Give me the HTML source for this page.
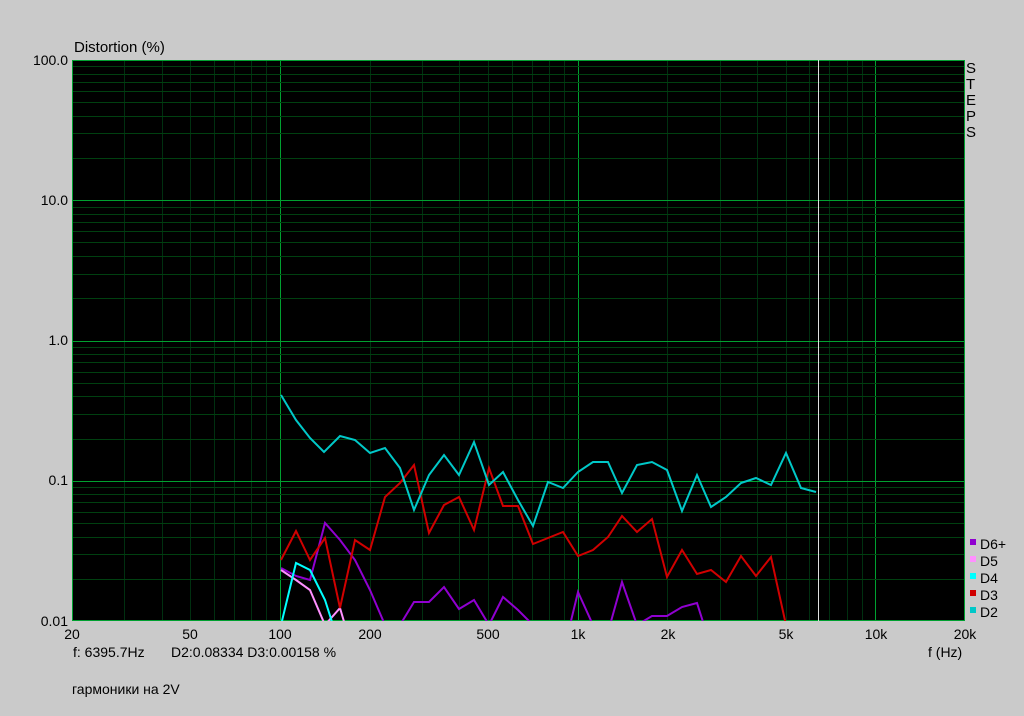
<!DOCTYPE html><html><head><style>
body{margin:0;background:#cacaca;width:1024px;height:711px;overflow:hidden;font-family:"Liberation Sans",sans-serif;}
svg text{font-family:"Liberation Sans",sans-serif;font-size:14px;fill:#000}
</style></head><body>
<svg width="1024" height="711" xmlns="http://www.w3.org/2000/svg" id="s">
<rect x="72" y="60" width="893" height="561" fill="#000"/>
<g id="g"></g>
<rect x="72.5" y="60.5" width="892" height="560" fill="none" stroke="#00a030"/>
<text x="74" y="52" style="font-size:15px">Distortion (%)</text>
<g text-anchor="end">
<text x="68" y="65">100.0</text><text x="68" y="205">10.0</text><text x="68" y="345">1.0</text><text x="68" y="485">0.1</text><text x="68" y="626">0.01</text></g>
<g text-anchor="middle">
<text x="72" y="639">20</text><text x="190" y="639">50</text><text x="280" y="639">100</text><text x="370" y="639">200</text><text x="488" y="639">500</text><text x="578" y="639">1k</text><text x="668" y="639">2k</text><text x="786" y="639">5k</text><text x="876" y="639">10k</text><text x="965" y="639">20k</text></g>
<text x="928" y="657">f (Hz)</text>
<text x="73" y="657">f: 6395.7Hz</text><text x="171" y="657">D2:0.08334  D3:0.00158 %</text>
<text x="72" y="694">гармоники на 2V</text>
<g><text x="966" y="73" style="font-size:15px">S</text><text x="966" y="89" style="font-size:15px">T</text><text x="966" y="105" style="font-size:15px">E</text><text x="966" y="121" style="font-size:15px">P</text><text x="966" y="137" style="font-size:15px">S</text></g>
<rect x="970" y="539" width="6" height="6" fill="#9000d0"/><text x="980" y="549">D6+</text>
<rect x="970" y="556" width="6" height="6" fill="#ff90ff"/><text x="980" y="566">D5</text>
<rect x="970" y="573" width="6" height="6" fill="#00ffff"/><text x="980" y="583">D4</text>
<rect x="970" y="590" width="6" height="6" fill="#d00000"/><text x="980" y="600">D3</text>
<rect x="970" y="607" width="6" height="6" fill="#00c8c8"/><text x="980" y="617">D2</text>
<line x1="818.5" y1="60" x2="818.5" y2="621" stroke="#e0e0e0"/>
<svg x="72" y="60" width="893" height="561" viewBox="72 60 893 561">
<g fill="none" stroke-width="2">
<polyline stroke="#9000d0" points="281,568 296,576 310,580 325,523 340,540 355,560 370,590 385,625 400,625 414,602 429,602 444,587 459,609 474,600 489,625 503,597 518,610 533,625 570,625 578,592 593,625 610,625 622,582 637,625 652,616 667,616 682,607 697,603 704,625"/>
<polyline stroke="#ff90ff" points="281,570 296,580 310,590 325,625 340,608 345,625"/>
<polyline stroke="#00ffff" points="281,625 296,563 310,570 325,600 333,625"/>
<polyline stroke="#d00000" points="281,560 296,531 310,560 325,538 340,608 355,540 370,550 385,497 400,483 414,465 429,533 444,505 459,497 474,530 489,468 503,506 518,506 533,544 548,538 563,532 578,556 593,550 608,537 622,516 637,532 652,519 667,577 682,550 697,574 711,570 726,582 741,556 756,576 771,557 786,625"/>
<polyline stroke="#00c8c8" points="281,395 296,420 310,438 324,452 340,436 355,440 370,453 385,448 400,468 414,510 429,475 444,455 459,475 474,442 489,485 503,472 518,500 533,526 548,482 563,488 578,472 593,462 608,462 622,493 637,465 652,462 667,470 682,511 697,475 711,507 726,497 741,483 756,478 771,485 786,453 801,488 816,492"/>
</g></svg>
</svg>
<script>
var g=document.getElementById('g'),h='';
function X(f){return 72+297.7*Math.log10(f/20)}
function Y(p){return 60+140.25*(2-Math.log10(p))}
[10,100,1000,10000].forEach(function(d){for(var m=1;m<10;m++){var f=d*m;if(f<=20||f>=20000)continue;var x=Math.round(X(f))+.5;var maj=(m==1);h+='<line x1="'+x+'" y1="60" x2="'+x+'" y2="621" stroke="'+(maj?'#00a030':'#003010')+'"/>';}});
[0.01,0.1,1,10].forEach(function(d){for(var m=1;m<10;m++){var p=d*m;if(p<=0.01)continue;var y=Math.round(Y(p))+.5;h+='<line x1="72" y1="'+y+'" x2="965" y2="'+y+'" stroke="'+(m==1?'#00a030':'#004010')+'"/>';}});
g.innerHTML=h;
</script>
</body></html>
